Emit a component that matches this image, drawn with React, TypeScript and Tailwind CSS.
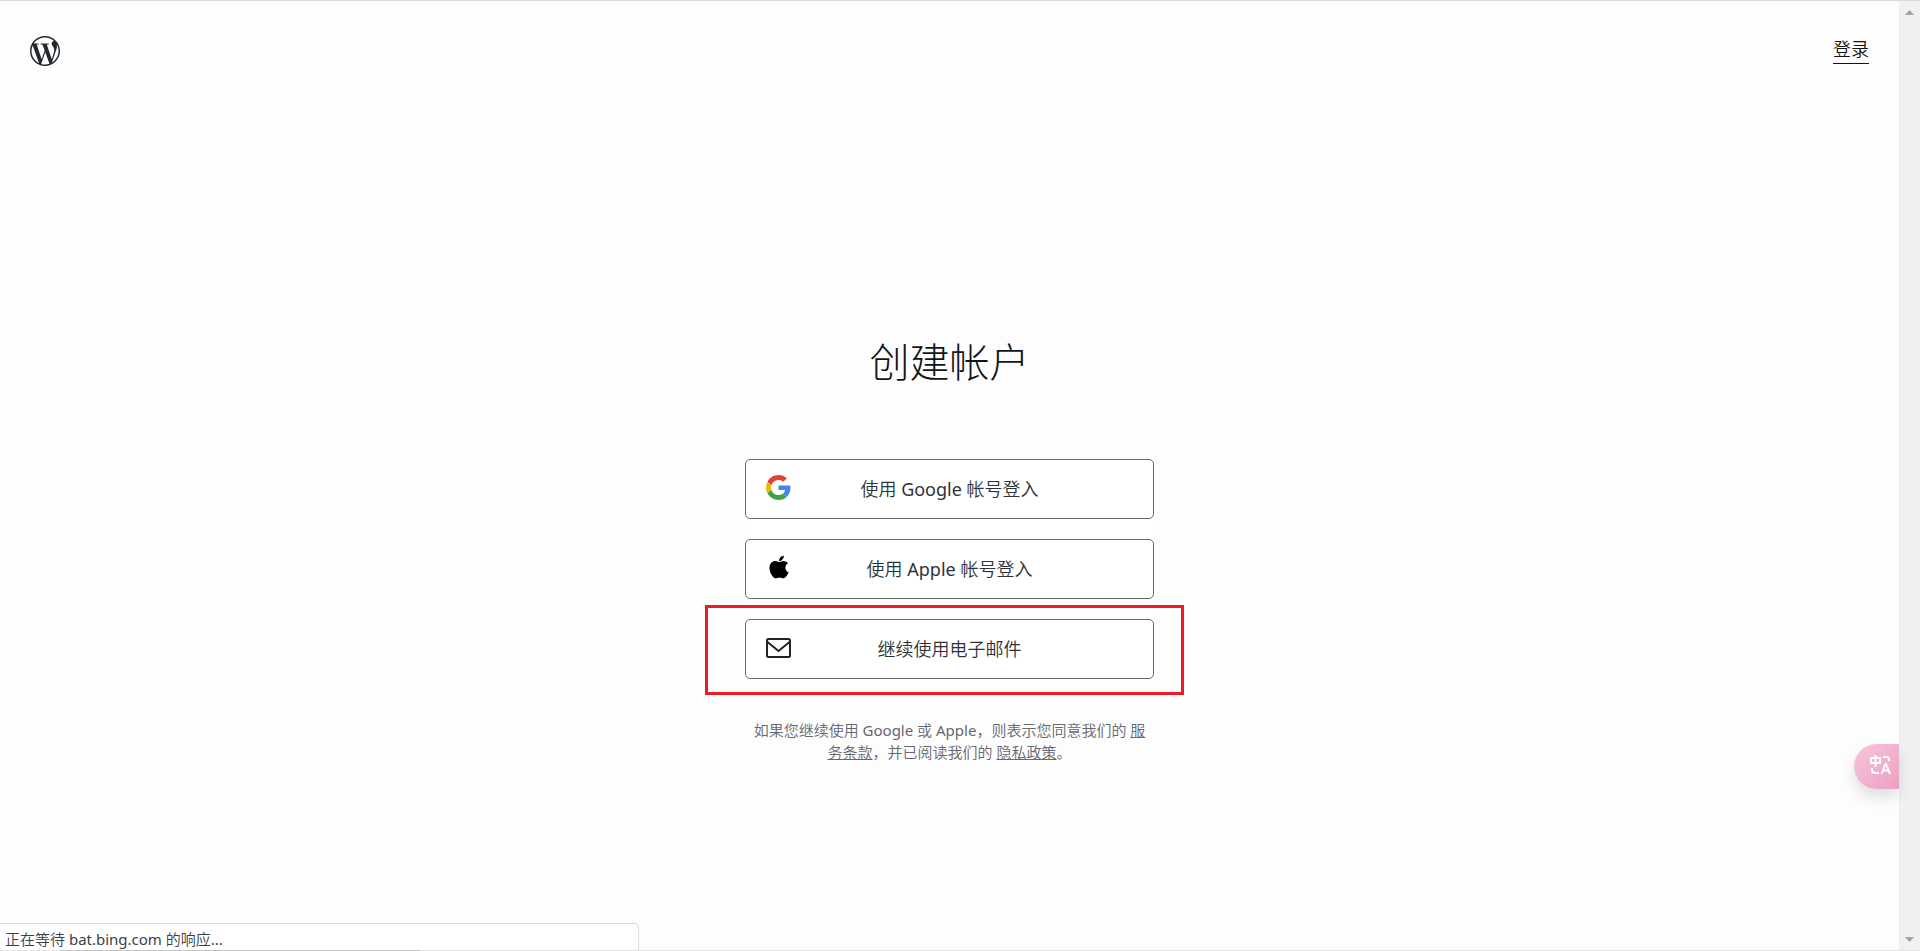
import type { ReactNode } from "react";
import { FaApple } from "react-icons/fa";

function WordPressLogo() {
  return (
    <svg viewBox="0 0 72 72" className="size-[30px]" fill="currentColor" aria-hidden="true">
      <path d="M36,0C16.1,0,0,16.1,0,36c0,19.9,16.1,36,36,36c19.900,0,36-16.200,36-36C72,16.100,55.800,0,36,0z M3.600,36c0-4.700,1-9.100,2.800-13.200l15.400,42.300C11.100,59.900,3.600,48.800,3.600,36z M36,68.400c-3.200,0-6.200-0.500-9.100-1.300l9.700-28.200l9.900,27.300c0.100,0.200,0.100,0.300,0.200,0.400C43.400,67.700,39.800,68.400,36,68.400z M40.500,20.800c1.900-0.100,3.700-0.300,3.700-0.300c1.700-0.200,1.500-2.800-0.200-2.700c0,0-5.200,0.400-8.600,0.400c-3.200,0-8.500-0.400-8.500-0.400c-1.700-0.100-2,2.600-0.200,2.700c0,0,1.700,0.200,3.400,0.300l5,13.800L28,55.900L16.200,20.800c2-0.100,3.700-0.300,3.700-0.300c1.700-0.200,1.500-2.800-0.200-2.700c0,0-5.200,0.400-8.600,0.400c-0.600,0-1.300,0-2.100,0C14.700,9.400,24.700,3.600,36,3.600c8.400,0,16.100,3.200,21.900,8.500c-0.100,0-0.300,0-0.400,0c-3.200,0-5.400,2.800-5.400,5.700c0,2.700,1.500,4.900,3.200,7.600c1.200,2.200,2.700,4.900,2.700,8.900c0,2.800-0.800,6.300-2.500,10.500l-3.200,10.800L40.500,20.800z M52.300,64l9.900-28.600c1.800-4.600,2.500-8.300,2.500-11.600c0-1.200-0.100-2.300-0.200-3.300c2.500,4.600,4,9.900,4,15.500C68.400,47.900,61.900,58.400,52.300,64z" />
    </svg>
  );
}

function GoogleIcon() {
  return (
    <svg viewBox="0 0 48 48" className="size-[25px]" aria-hidden="true">
      <path fill="#db4437" d="M24 9.5c3.54 0 6.71 1.22 9.21 3.6l6.85-6.85C35.9 2.38 30.47 0 24 0 14.62 0 6.51 5.38 2.56 13.22l7.98 6.19C12.43 13.72 17.74 9.5 24 9.5z" />
      <path fill="#4285f4" d="M46.98 24.55c0-1.57-.15-3.09-.38-4.55H24v9.02h12.94c-.58 2.96-2.26 5.48-4.78 7.18l7.73 6c4.51-4.18 7.09-10.36 7.09-17.65z" />
      <path fill="#f4b400" d="M10.53 28.59c-.48-1.45-.76-2.99-.76-4.59s.27-3.14.76-4.59l-7.98-6.19C.92 16.46 0 20.12 0 24c0 3.88.92 7.54 2.56 10.78l7.97-6.19z" />
      <path fill="#43a047" d="M24 48c6.48 0 11.93-2.13 15.89-5.81l-7.73-6c-2.15 1.45-4.92 2.3-8.16 2.3-6.26 0-11.57-4.22-13.47-9.91l-7.98 6.19C6.51 42.62 14.62 48 24 48z" />
    </svg>
  );
}

function MailIcon() {
  return (
    <svg viewBox="0 0 25 25" className="size-[25px]" fill="none" stroke="#1d2327" strokeWidth="2" aria-hidden="true">
      <rect x="1" y="4" width="23" height="18" rx="1.5" />
      <path d="M1.5 7 12.5 16 23.5 7" />
    </svg>
  );
}

function TranslateIcon() {
  return (
    <svg viewBox="0 0 22 20" className="h-5 w-[22px]" fill="none" stroke="#fff" strokeWidth="2" aria-hidden="true">
      <path d="M1 3h9v5H1zM5.500 0v12" />
      <path d="M13 2h3.500q2.500 0 2.500 2.500V6M2 13v2q0 3 3 3h4" strokeLinejoin="round" />
      <path d="M11.500 19 15.500 9h.500L20 19M12.500 15.500h6.500" />
    </svg>
  );
}

function SignInButton({ icon, children }: { icon: ReactNode; children: ReactNode }) {
  return (
    <button type="button" className="flex h-[60px] w-full items-center rounded-[5px] border border-[#646970] bg-white px-5 text-lg text-[#2c3338]">
      <span className="flex w-[25px] justify-center pb-1">{icon}</span>
      <span className="flex-1 pr-[25px] text-center">{children}</span>
    </button>
  );
}

function Latin({ children }: { children: ReactNode }) {
  return <span className="font-normal">{children}</span>;
}

export default function App() {
  return (
    <div lang="zh-CN" className="relative flex min-h-screen overflow-hidden border-t border-[#dadada] bg-[#fdfdfd] font-['Noto_Sans','Noto_Sans_CJK_SC',sans-serif] font-[350]">
      <div className="flex flex-1 flex-col">
        <header className="flex items-start justify-between px-[30px] pt-[35px]">
          <a href="#home" aria-label="WordPress.com" className="text-[#23282d]">
            <WordPressLogo />
          </a>
          <a href="#login" className="border-b border-[#101517] text-lg leading-[27px] text-[#101517]">登录</a>
        </header>

        <main className="flex flex-col items-center pt-[271px]">
          <h1 className="text-[40px] leading-[50px] font-light text-[#101517]">创建帐户</h1>
          <div className="mt-[72px] flex w-[409px] flex-col gap-5 bg-white">
            <SignInButton icon={<GoogleIcon />}>使用 <Latin>Google</Latin> 帐号登入</SignInButton>
            <SignInButton icon={<FaApple className="size-[26px] shrink-0 text-black" />}>使用 <Latin>Apple</Latin> 帐号登入</SignInButton>
            <div className="relative">
              <SignInButton icon={<MailIcon />}>继续使用电子邮件</SignInButton>
              <div className="pointer-events-none absolute -top-3.5 -right-[30px] -bottom-4 -left-10 border-3 border-[#ed1c24]" />
            </div>
          </div>
          <p className="mt-10 w-[409px] text-center text-[15px] leading-[22px] text-[#646970]">
            如果您继续使用 <Latin>Google</Latin> 或 <Latin>Apple</Latin>，则表示您同意我们的 <a href="#terms" className="underline">服<br />务条款</a>，并已阅读我们的 <a href="#privacy" className="underline">隐私政策</a>。
          </p>
        </main>
      </div>

      <div className="flex w-[21px] flex-col items-center justify-between bg-[#f0f0f0] py-[9px]" aria-hidden="true">
        <svg viewBox="0 0 9 5" className="h-[5px] w-[9px]" fill="#a3a3a3"><path d="M0 5 4.500 0 9 5z" /></svg>
        <svg viewBox="0 0 9 5" className="h-[5px] w-[9px]" fill="#a3a3a3"><path d="M0 0 4.500 5 9 0z" /></svg>
      </div>

      <button type="button" aria-label="翻译" className="absolute right-[21px] bottom-[162px] flex h-[45px] w-[45px] items-center rounded-l-full bg-linear-to-br from-[#f9c5dc] to-[#eba0c3] pb-1 pl-4 shadow-[0_8px_14px_rgba(0,0,0,0.12)]">
        <TranslateIcon />
      </button>

      <div className="absolute bottom-0 left-0 h-7 w-[639px] rounded-tr-[5px] border-t border-r border-[#dadada] bg-white pl-[5px] text-[15px] leading-[30px] text-[#3c4043]">
        正在等待 <Latin>bat.bing.com</Latin> 的响应<Latin>...</Latin>
      </div>
      <div className="absolute inset-x-0 bottom-0 h-px bg-[#e4e4e4]">
        <div className="ml-[60px] h-px w-[360px] bg-[#c4c4c4]" />
      </div>
    </div>
  );
}
